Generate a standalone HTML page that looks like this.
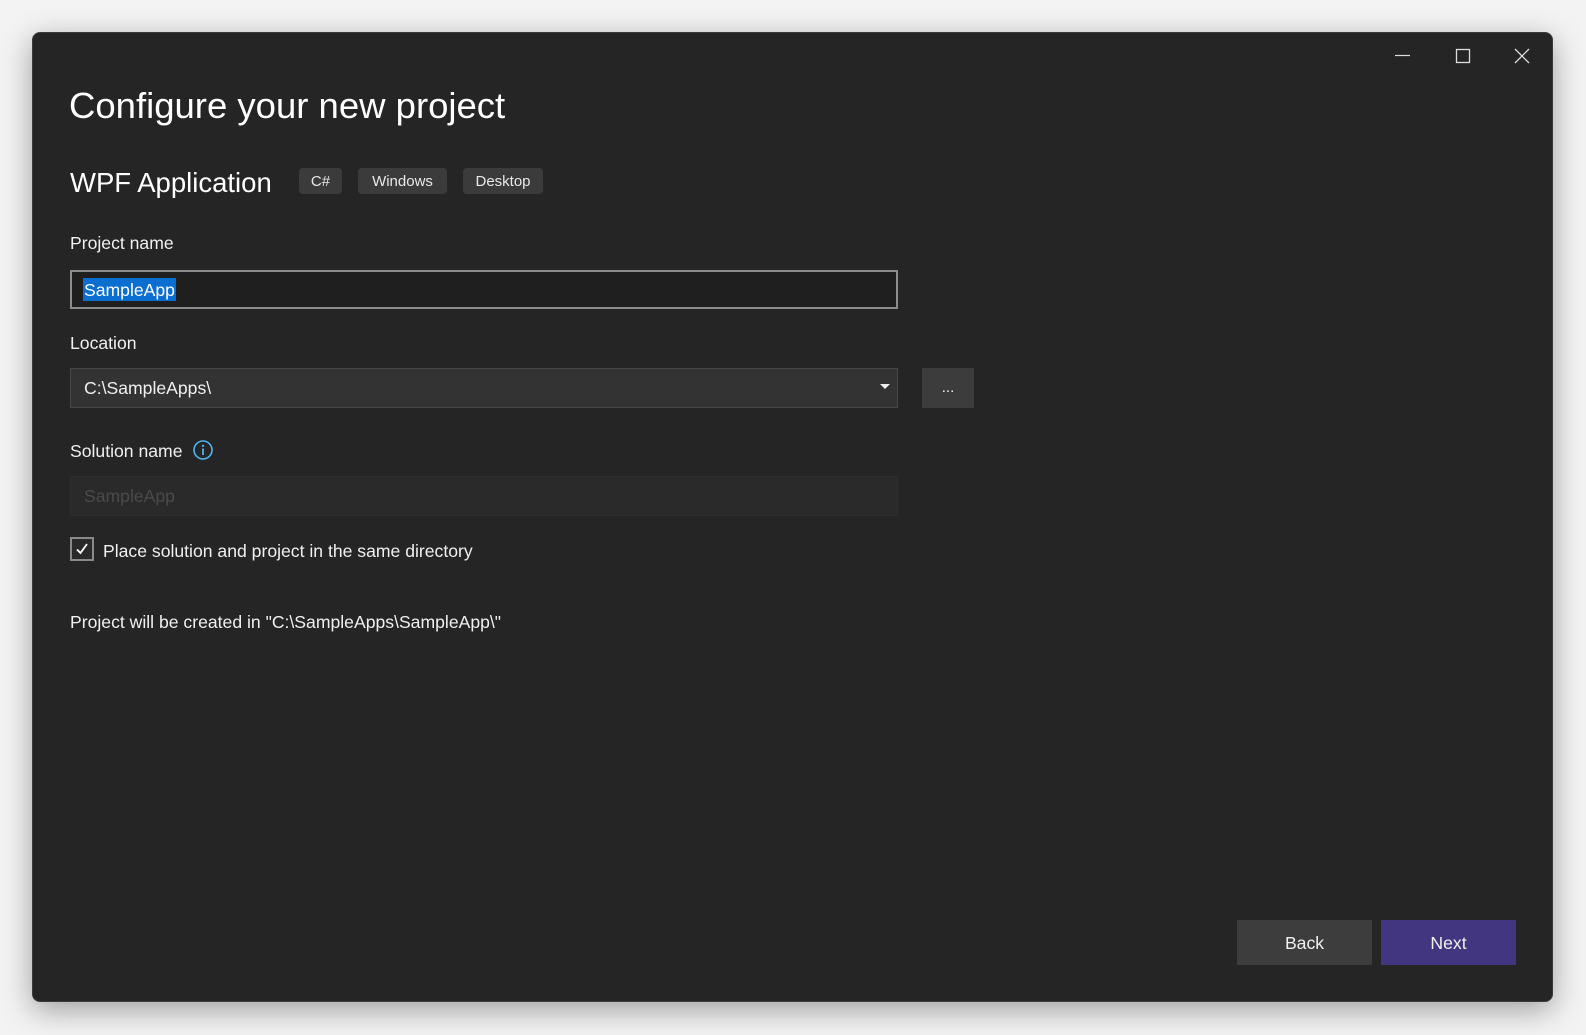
<!DOCTYPE html>
<html><head><meta charset="utf-8"><style>
*{margin:0;padding:0;box-sizing:border-box}
body{width:1586px;height:1035px;background:#f3f3f3;font-family:"Segoe UI","Liberation Sans",sans-serif;color:#f0f0f0;position:relative;overflow:hidden}
.win{position:absolute;left:32px;top:32px;width:1521px;height:970px;background:#252525;border:1px solid #3a3a3a;border-radius:8px;box-shadow:0 8px 30px rgba(0,0,0,.35)}
.a{position:absolute;white-space:nowrap}
.tag{position:absolute;top:168px;height:26px;background:#3b3b3b;border-radius:4px;font-size:15px;line-height:28px;text-align:center;color:#e8e8e8}
.lbl{font-size:17.6px;color:#f0f0f0}
.box{position:absolute;left:70px;width:828px}
</style></head><body>
<div class="win"></div>
<svg class="a" style="left:1395px;top:48px" width="140" height="20">
<line x1="0" y1="7.5" x2="15" y2="7.5" stroke="#ddd" stroke-width="1.2"/>
<rect x="61.5" y="1.5" width="13" height="13" fill="none" stroke="#ddd" stroke-width="1.3"/>
<path d="M120 1 L134 15 M134 1 L120 15" stroke="#ddd" stroke-width="1.3"/>
</svg>
<div class="a" style="left:69px;top:82px;font-size:36.5px;line-height:48px;color:#fff">Configure your new project</div>
<div class="a" style="left:70px;top:164px;font-size:27.5px;line-height:38px;color:#fff">WPF Application</div>
<div class="tag" style="left:299px;width:43px">C#</div>
<div class="tag" style="left:358px;width:89px">Windows</div>
<div class="tag" style="left:463px;width:80px">Desktop</div>
<div class="a lbl" style="left:70px;top:233px">Project name</div>
<div class="box" style="top:270px;height:39px;border:2px solid #8c8c8c;background:#1f1f1f"></div>
<div class="a" style="left:83px;top:278px;height:23px;background:#0a6fd0;color:#fff;font-size:17.6px;line-height:24px;padding:0 1px">SampleApp</div>
<div class="a lbl" style="left:70px;top:333px">Location</div>
<div class="box" style="top:368px;height:40px;border:1px solid #474747;background:#333"></div>
<div class="a" style="left:84px;top:377px;font-size:17.6px;line-height:23px">C:\SampleApps\</div>
<svg class="a" style="left:880px;top:384px" width="10" height="6"><path d="M0 0 L10 0 L5 5Z" fill="#eee"/></svg>
<div class="a" style="left:922px;top:368px;width:52px;height:40px;background:#3c3c3c;text-align:center;font-size:15px;line-height:40px">...</div>
<div class="a lbl" style="left:70px;top:441px">Solution name</div>
<svg class="a" style="left:192px;top:439px" width="22" height="22"><circle cx="11" cy="11" r="9" fill="none" stroke="#4fb3f0" stroke-width="1.6"/><circle cx="11" cy="6.8" r="1.2" fill="#4fb3f0"/><line x1="11" y1="9.5" x2="11" y2="16" stroke="#4fb3f0" stroke-width="1.8"/></svg>
<div class="box" style="top:476px;height:40px;border:1px solid #2e2e2e;background:#2a2a2a"></div>
<div class="a" style="left:84px;top:485px;font-size:17.6px;line-height:23px;color:#4a4a4a">SampleApp</div>
<div class="a" style="left:70px;top:537px;width:24px;height:24px;border:2px solid #8a8a8a;background:#2a2a2a"></div>
<svg class="a" style="left:74px;top:541px" width="16" height="16"><path d="M3 8.5 L6.5 12 L13 3" fill="none" stroke="#fff" stroke-width="1.8"/></svg>
<div class="a lbl" style="left:103px;top:541px">Place solution and project in the same directory</div>
<div class="a lbl" style="left:70px;top:612px">Project will be created in "C:\SampleApps\SampleApp\"</div>
<div class="a" style="left:1237px;top:920px;width:135px;height:45px;background:#3d3d3d;text-align:center;line-height:46px;font-size:17.6px">Back</div>
<div class="a" style="left:1381px;top:920px;width:135px;height:45px;background:#433681;text-align:center;line-height:46px;font-size:17.6px">Next</div>
</body></html>
